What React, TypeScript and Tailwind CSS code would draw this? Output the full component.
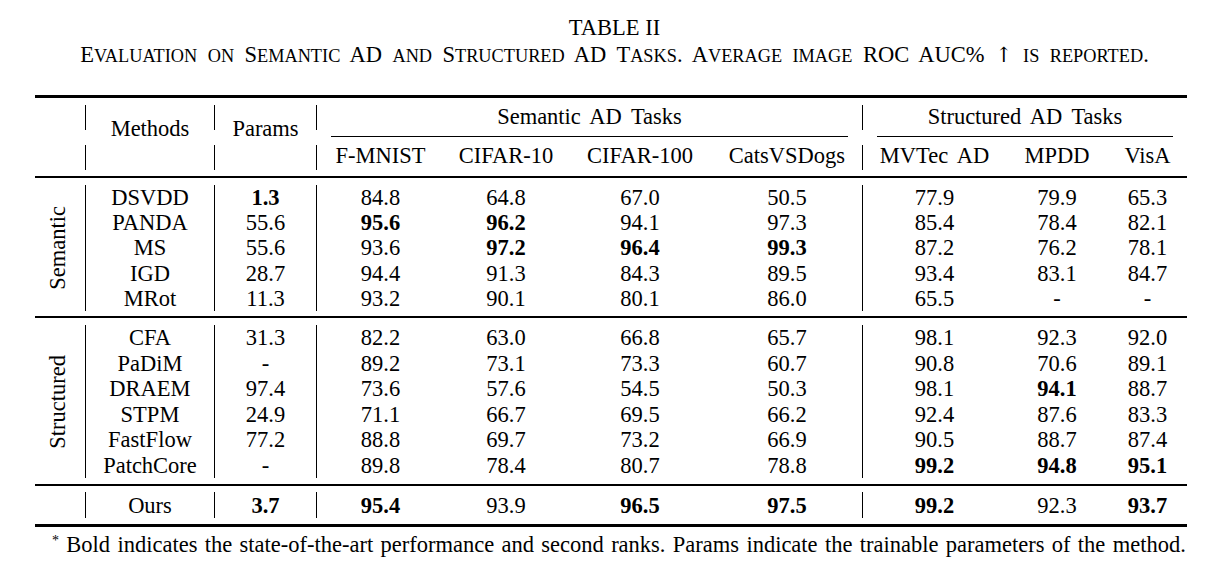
import React from "react";

type Cell = { v: string; b?: boolean };

const c = (v: string, b?: boolean): Cell => ({ v, b });

const semantic: [string, Cell[]][] = [
  ["DSVDD", [c("1.3", true), c("84.8"), c("64.8"), c("67.0"), c("50.5"), c("77.9"), c("79.9"), c("65.3")]],
  ["PANDA", [c("55.6"), c("95.6", true), c("96.2", true), c("94.1"), c("97.3"), c("85.4"), c("78.4"), c("82.1")]],
  ["MS", [c("55.6"), c("93.6"), c("97.2", true), c("96.4", true), c("99.3", true), c("87.2"), c("76.2"), c("78.1")]],
  ["IGD", [c("28.7"), c("94.4"), c("91.3"), c("84.3"), c("89.5"), c("93.4"), c("83.1"), c("84.7")]],
  ["MRot", [c("11.3"), c("93.2"), c("90.1"), c("80.1"), c("86.0"), c("65.5"), c("-"), c("-")]],
];

const structured: [string, Cell[]][] = [
  ["CFA", [c("31.3"), c("82.2"), c("63.0"), c("66.8"), c("65.7"), c("98.1"), c("92.3"), c("92.0")]],
  ["PaDiM", [c("-"), c("89.2"), c("73.1"), c("73.3"), c("60.7"), c("90.8"), c("70.6"), c("89.1")]],
  ["DRAEM", [c("97.4"), c("73.6"), c("57.6"), c("54.5"), c("50.3"), c("98.1"), c("94.1", true), c("88.7")]],
  ["STPM", [c("24.9"), c("71.1"), c("66.7"), c("69.5"), c("66.2"), c("92.4"), c("87.6"), c("83.3")]],
  ["FastFlow", [c("77.2"), c("88.8"), c("69.7"), c("73.2"), c("66.9"), c("90.5"), c("88.7"), c("87.4")]],
  ["PatchCore", [c("-"), c("89.8"), c("78.4"), c("80.7"), c("78.8"), c("99.2", true), c("94.8", true), c("95.1", true)]],
];

const ours: [string, Cell[]] = [
  "Ours",
  [c("3.7", true), c("95.4", true), c("93.9"), c("96.5", true), c("97.5", true), c("99.2", true), c("92.3"), c("93.7", true)],
];

const valueCols = [
  "w-[102px] border-l border-black",
  "w-[128px] border-l border-black",
  "w-[124px]",
  "w-[144px]",
  "w-[150px]",
  "w-[144px] border-l border-black",
  "w-[102px]",
  "w-[79px]",
];

function Row({ name, cells, h }: { name: string; cells: Cell[]; h: string }) {
  return (
    <div className={`flex ${h}`}>
      <div className="w-[129px] border-l border-black flex items-center justify-center">{name}</div>
      {cells.map((cell, i) => (
        <div
          key={i}
          className={`${valueCols[i]} flex items-center justify-center ${cell.b ? "font-bold" : ""}`}
        >
          {cell.v}
        </div>
      ))}
    </div>
  );
}

function Sep() {
  return (
    <div className="w-px flex flex-col">
      <div className="mt-[7px] h-[25px] bg-black" />
      <div className="mt-[15px] h-[25px] bg-black" />
    </div>
  );
}

function Group({
  label,
  rows,
  h,
  pad,
}: {
  label: string;
  rows: [string, Cell[]][];
  h: string;
  pad: string;
}) {
  return (
    <div className={`flex ${pad}`}>
      <div className="w-[50px] flex items-center justify-center pr-[4px]">
        <span className="[writing-mode:vertical-rl] rotate-180 leading-[26px]">{label}</span>
      </div>
      <div className="flex flex-col">
        {rows.map(([n, cs]) => (
          <Row key={n} name={n} cells={cs} h={h} />
        ))}
      </div>
    </div>
  );
}

function SmallCaps({ text }: { text: string }) {
  const parts = text.split(/([a-z]+|↑)/);
  return (
    <>
      {parts.map((p, i) =>
        p === "↑" ? (
          <span key={i} className="font-['DejaVu_Serif',serif] font-light text-[21px] leading-none">
            {"\u2191\uFE0E"}
          </span>
        ) : /^[a-z]+$/.test(p) ? (
          <span key={i} className="text-[18.3px] leading-none">
            {p.toUpperCase()}
          </span>
        ) : (
          <span key={i}>{p}</span>
        )
      )}
    </>
  );
}

export default function App() {
  return (
    <div className="w-[1229px] h-[569px] bg-white text-black font-['Liberation_Serif',serif] text-[22.5px] overflow-hidden">
      <div className="pt-[14px] text-center leading-[27px]">
        <div className="h-[27px]">TABLE II</div>
        <div className="h-[27px] [word-spacing:4.8px] whitespace-nowrap">
          <SmallCaps text="Evaluation on Semantic AD and Structured AD Tasks. Average image ROC AUC% ↑ is reported." />
        </div>
      </div>

      <div className="ml-[35px] w-[1152px] mt-[27px] [word-spacing:4px]">
        <div className="h-[3px] bg-black" />

        {/* header */}
        <div className="flex h-[78px] leading-[26px]">
          <div className="w-[50px]" />
          <Sep />
          <div className="w-[128px] pt-[18px] text-center">Methods</div>
          <Sep />
          <div className="w-[101px] pt-[18px] text-center">Params</div>
          <Sep />
          <div className="w-[545px] flex flex-col">
            <div className="pt-[6px] text-center">Semantic AD Tasks</div>
            <div className="mt-[6px] mx-[14px] h-px bg-black" />
            <div className="mt-[6px] flex">
              <div className="w-[127px] text-center">F-MNIST</div>
              <div className="w-[124px] text-center">CIFAR-10</div>
              <div className="w-[144px] text-center">CIFAR-100</div>
              <div className="w-[150px] text-center">CatsVSDogs</div>
            </div>
          </div>
          <Sep />
          <div className="w-[324px] flex flex-col">
            <div className="pt-[6px] text-center">Structured AD Tasks</div>
            <div className="mt-[6px] mx-[14px] h-px bg-black" />
            <div className="mt-[6px] flex">
              <div className="w-[143px] text-center">MVTec AD</div>
              <div className="w-[102px] text-center">MPDD</div>
              <div className="w-[79px] text-center">VisA</div>
            </div>
          </div>
        </div>

        <div className="h-[2px] bg-black" />
        <Group label="Semantic" rows={semantic} h="h-[25.3px]" pad="pt-[7px] pb-[5px]" />
        <div className="h-[2px] bg-black" />
        <Group label="Structured" rows={structured} h="h-[25.5px]" pad="pt-[7px] pb-[6px]" />
        <div className="h-[2px] bg-black" />
        <div className="flex pt-[6px] pb-[6px]">
          <div className="w-[50px]" />
          <Row name={ours[0]} cells={ours[1]} h="h-[26px]" />
        </div>
        <div className="h-[3px] bg-black" />

        <div className="mt-[5px] pl-[17px] leading-[26px] whitespace-nowrap [word-spacing:1.7px]">
          <sup className="text-[14px]">*</sup>{" "}
          Bold indicates the state-of-the-art performance and second ranks. Params indicate the trainable parameters of the method.
        </div>
      </div>
    </div>
  );
}
